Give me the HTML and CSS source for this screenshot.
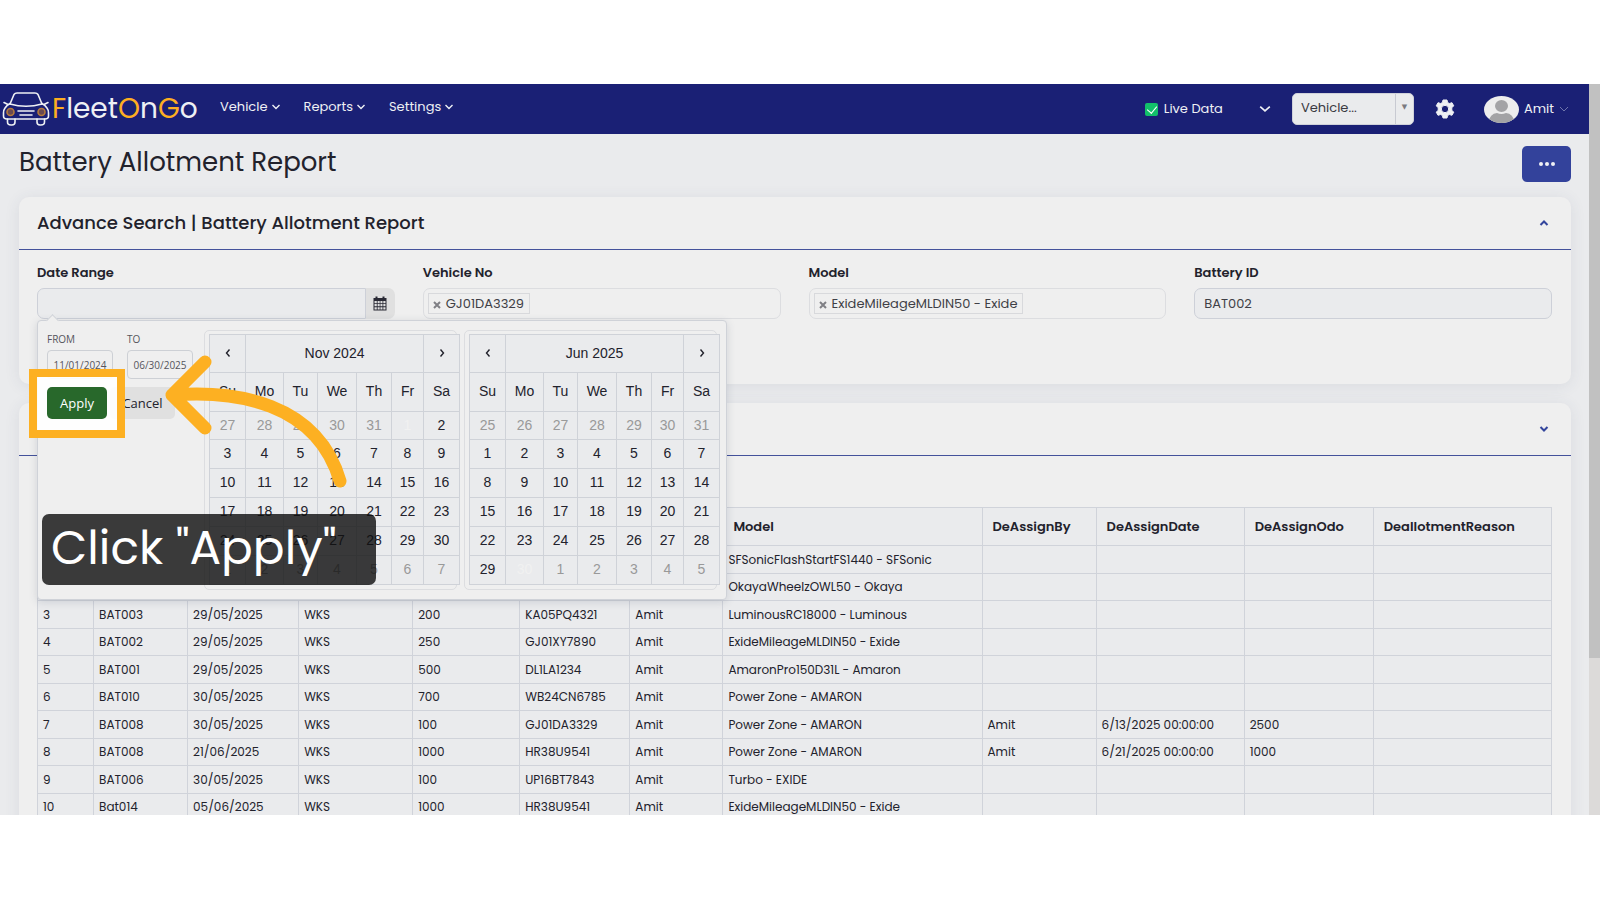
FILE: index.html
```html
<!DOCTYPE html>
<html lang="en">
<head>
  <meta charset="UTF-8" />
  <meta name="viewport" content="width=device-width, initial-scale=1.0" />
  <title>Battery Allotment Report</title>
  <link rel="stylesheet" href="styles.css">
</head>
<body>
  <div class="frame">
    <div class="main">
      <header class="navbar">
        <a class="logo" href="#">
          <svg width="48" height="36" viewBox="0 0 48 36" fill="none" stroke="#eef0f4" stroke-width="1.6" stroke-linecap="round" stroke-linejoin="round">
            <path d="M8 13 L12 3.500 Q13 2 15 2 H33 Q35 2 36 3.500 L40 13" />
            <path d="M8 12.500 Q5 14 3 17 Q1.500 19 1.500 22 V25 Q1.500 28 5 28 H43 Q46.500 28 46.500 25 V22 Q46.500 19 45 17 Q43 14 40 12.500" />
            <path d="M8 13 Q24 17.500 40 13 M2 11.500 L6 13.500 M46 11.500 L42 13.500" />
            <path d="M5.500 28 V31 Q5.500 34 9 34 H10 Q13 34 13 31 V28 M35 28 V31 Q35 34 38 34 H39 Q42.500 34 42.500 31 V28" />
            <path d="M16 20 H32 M18 24 H30" />
            <circle cx="8.500" cy="21" r="3.500" fill="#6b4a50" stroke="#b57a3c" />
            <circle cx="39.500" cy="21" r="3.500" fill="#6b4a50" stroke="#b57a3c" />
          </svg>
          <span><b>F</b>leet<b>O</b>n<b>G</b>o</span>
        </a>
        <nav class="menu">
          <a href="#">Vehicle <svg class="chev" viewBox="0 0 10 10"><path d="M1.500 3 L5 6.500 L8.500 3" /></svg></a>
          <a href="#">Reports <svg class="chev" viewBox="0 0 10 10"><path d="M1.500 3 L5 6.500 L8.500 3" /></svg></a>
          <a href="#">Settings <svg class="chev" viewBox="0 0 10 10"><path d="M1.500 3 L5 6.500 L8.500 3" /></svg></a>
        </nav>
        <div class="nav-right">
          <label class="live"><input type="checkbox" checked /> Live Data</label>
          <button class="icon-btn live-toggle" aria-label="Data options"><svg class="chev big" viewBox="0 0 10 10"><path d="M1 3 L5 6.500 L9 3" /></svg></button>
          <div class="vehicle-select">
            <select aria-label="Vehicle"><option>Vehicle...</option></select>
          </div>
          <button class="icon-btn gear" aria-label="Preferences">
            <svg width="20" height="20" viewBox="0 0 20 20">
              <path fill="#eef0f4" stroke="#eef0f4" stroke-linejoin="round" fill-rule="evenodd" d="M8 1 H12 L12.600 3.500 L14.300 4.500 L17 3.700 L18.700 6.800 L16.800 8.800 V11.200 L18.700 13.200 L17 16.300 L14.300 15.500 L12.600 16.500 L12 19 H8 L7.400 16.500 L5.700 15.500 L3 16.300 L1.300 13.200 L3.200 11.200 V8.800 L1.300 6.800 L3 3.700 L5.700 4.500 L7.400 3.500 Z M10 6.300 A3.700 3.700 0 1 0 10 13.700 A3.700 3.700 0 1 0 10 6.300 Z" />
            </svg>
          </button>
          <button class="icon-btn user">
            <svg width="35" height="27" viewBox="0 0 35 27">
              <clipPath id="face"><ellipse cx="17.500" cy="13.500" rx="17.500" ry="13.500" /></clipPath>
              <g clip-path="url(#face)">
                <rect width="35" height="27" fill="#ededed" />
                <ellipse cx="17.500" cy="10" rx="6.500" ry="6" fill="#a3a3a5" />
                <path d="M4 27 Q6 17.500 13 17 Q17.500 19 22 17 Q29 17.500 31 27 Z" fill="#a3a3a5" />
              </g>
            </svg>
            Amit
            <svg class="chev dim" viewBox="0 0 10 10"><path d="M1 3 L5 7 L9 3" /></svg>
          </button>
        </div>
      </header>

      <div class="page-head">
        <h1>Battery Allotment Report</h1>
        <button class="more" aria-label="More actions"><span></span><span></span><span></span></button>
      </div>

      <section class="card search-card">
        <div class="card-header">
          <h2>Advance Search | Battery Allotment Report</h2>
          <button class="icon-btn" aria-label="Collapse"><svg class="chev blue" viewBox="0 0 10 10"><path d="M1.500 7 L5 3.500 L8.500 7" /></svg></button>
        </div>
        <div class="filters">
          <div class="field">
            <label for="date-range">Date Range</label>
            <div class="date-group">
              <input type="text" id="date-range" autocomplete="off" />
              <button class="addon" aria-label="Open calendar">
                <svg width="14" height="15" viewBox="0 0 14 15">
                  <path fill="#2a2a35" fill-rule="evenodd" d="M0.500 2 H2.500 V0.500 H4.500 V2 H9.500 V0.500 H11.500 V2 H13.500 V14.500 H0.500 Z M1.500 5 V7.200 H3.800 V5 Z M4.600 5 V7.200 H6.700 V5 Z M7.400 5 V7.200 H9.500 V5 Z M10.300 5 V7.200 H12.500 V5 Z M1.500 8 V10.300 H3.800 V8 Z M4.600 8 V10.300 H6.700 V8 Z M7.400 8 V10.300 H9.500 V8 Z M10.300 8 V10.300 H12.500 V8 Z M1.500 11.200 V13.500 H3.800 V11.200 Z M4.600 11.200 V13.500 H6.700 V11.200 Z M7.400 11.200 V13.500 H9.500 V11.200 Z M10.300 11.200 V13.500 H12.500 V11.200 Z" />
                </svg>
              </button>
            </div>

            <div class="picker">
              <div class="range">
                <div class="range-inputs">
                  <label>FROM <input type="text" value="11/01/2024" /></label>
                  <label>TO <input type="text" value="06/30/2025" /></label>
                </div>
                <div class="range-buttons">
                  <button class="apply">Apply</button>
                  <button class="cancel">Cancel</button>
                </div>
              </div>
              <div class="calendar">
                <table>
                  <thead>
                    <tr class="month"><th><svg class="chev" viewBox="0 0 10 10"><path d="M6.500 1.500 L3.500 5 L6.500 8.500" /></svg></th><th colspan="5">Nov 2024</th><th><svg class="chev" viewBox="0 0 10 10"><path d="M3.500 1.500 L6.500 5 L3.500 8.500" /></svg></th></tr>
                    <tr><th class="w36">Su</th><th class="w38">Mo</th><th class="w34">Tu</th><th class="w39">We</th><th class="w35">Th</th><th class="w32">Fr</th><th class="w36">Sa</th></tr>
                  </thead>
                  <tbody>
                    <tr><td class="off">27</td><td class="off">28</td><td class="off">29</td><td class="off">30</td><td class="off">31</td><td class="active">1</td><td>2</td></tr>
                    <tr><td>3</td><td>4</td><td>5</td><td>6</td><td>7</td><td>8</td><td>9</td></tr>
                    <tr><td>10</td><td>11</td><td>12</td><td>13</td><td>14</td><td>15</td><td>16</td></tr>
                    <tr><td>17</td><td>18</td><td>19</td><td>20</td><td>21</td><td>22</td><td>23</td></tr>
                    <tr><td>24</td><td>25</td><td>26</td><td>27</td><td>28</td><td>29</td><td>30</td></tr>
                    <tr><td class="off">1</td><td class="off">2</td><td class="off">3</td><td class="off">4</td><td class="off">5</td><td class="off">6</td><td class="off">7</td></tr>
                  </tbody>
                </table>
              </div>
              <div class="calendar">
                <table>
                  <thead>
                    <tr class="month"><th><svg class="chev" viewBox="0 0 10 10"><path d="M6.500 1.500 L3.500 5 L6.500 8.500" /></svg></th><th colspan="5">Jun 2025</th><th><svg class="chev" viewBox="0 0 10 10"><path d="M3.500 1.500 L6.500 5 L3.500 8.500" /></svg></th></tr>
                    <tr><th class="w36">Su</th><th class="w38">Mo</th><th class="w34">Tu</th><th class="w39">We</th><th class="w35">Th</th><th class="w32">Fr</th><th class="w36">Sa</th></tr>
                  </thead>
                  <tbody>
                    <tr><td class="off">25</td><td class="off">26</td><td class="off">27</td><td class="off">28</td><td class="off">29</td><td class="off">30</td><td class="off">31</td></tr>
                    <tr><td>1</td><td>2</td><td>3</td><td>4</td><td>5</td><td>6</td><td>7</td></tr>
                    <tr><td>8</td><td>9</td><td>10</td><td>11</td><td>12</td><td>13</td><td>14</td></tr>
                    <tr><td>15</td><td>16</td><td>17</td><td>18</td><td>19</td><td>20</td><td>21</td></tr>
                    <tr><td>22</td><td>23</td><td>24</td><td>25</td><td>26</td><td>27</td><td>28</td></tr>
                    <tr><td>29</td><td class="active">30</td><td class="off">1</td><td class="off">2</td><td class="off">3</td><td class="off">4</td><td class="off">5</td></tr>
                  </tbody>
                </table>
              </div>

              <!-- walkthrough step -->
              <div class="spotlight"></div>
              <svg class="arrow" width="190" height="140" viewBox="0 0 190 140">
                <path d="M11 45 C74 40 156 52 179 131 M44 12 L11 45 L44 78" />
              </svg>
              <div class="step">Click "Apply"</div>
            </div>
          </div>

          <div class="field">
            <label for="vehicle-no">Vehicle No</label>
            <div class="tags">
              <span class="tag"><button aria-label="Remove vehicle"><svg viewBox="0 0 8 8"><path d="M1 1 L7 7 M7 1 L1 7" /></svg></button>GJ01DA3329</span>
              <input type="text" id="vehicle-no" />
            </div>
          </div>
          <div class="field">
            <label for="model">Model</label>
            <div class="tags">
              <span class="tag"><button aria-label="Remove model"><svg viewBox="0 0 8 8"><path d="M1 1 L7 7 M7 1 L1 7" /></svg></button>ExideMileageMLDIN50 - Exide</span>
              <input type="text" id="model" />
            </div>
          </div>
          <div class="field">
            <label for="battery-id">Battery ID</label>
            <input class="text-input" type="text" id="battery-id" value="BAT002" />
          </div>
        </div>
      </section>

      <section class="card">
        <div class="card-header">
          <h2></h2>
          <button class="icon-btn" aria-label="Expand"><svg class="chev blue" viewBox="0 0 10 10"><path d="M1.500 3 L5 6.500 L8.500 3" /></svg></button>
        </div>
        <div class="report">
          <table>
            <colgroup>
              <col class="c-no"><col class="c-id"><col class="c-date"><col class="c-type"><col class="c-odo"><col class="c-veh"><col class="c-by"><col class="c-model"><col class="c-dby"><col class="c-ddate"><col class="c-dodo"><col class="c-reason">
            </colgroup>
            <thead>
              <tr><th></th><th></th><th></th><th></th><th></th><th></th><th></th><th>Model</th><th>DeAssignBy</th><th>DeAssignDate</th><th>DeAssignOdo</th><th>DeallotmentReason</th></tr>
            </thead>
            <tbody>
              <tr><td></td><td></td><td></td><td></td><td></td><td></td><td></td><td>SFSonicFlashStartFS1440 - SFSonic</td><td></td><td></td><td></td><td></td></tr>
              <tr><td></td><td></td><td></td><td></td><td></td><td></td><td></td><td>OkayaWheelzOWL50 - Okaya</td><td></td><td></td><td></td><td></td></tr>
              <tr><td>3</td><td>BAT003</td><td>29/05/2025</td><td>WKS</td><td>200</td><td>KA05PQ4321</td><td>Amit</td><td>LuminousRC18000 - Luminous</td><td></td><td></td><td></td><td></td></tr>
              <tr><td>4</td><td>BAT002</td><td>29/05/2025</td><td>WKS</td><td>250</td><td>GJ01XY7890</td><td>Amit</td><td>ExideMileageMLDIN50 - Exide</td><td></td><td></td><td></td><td></td></tr>
              <tr><td>5</td><td>BAT001</td><td>29/05/2025</td><td>WKS</td><td>500</td><td>DL1LA1234</td><td>Amit</td><td>AmaronPro150D31L - Amaron</td><td></td><td></td><td></td><td></td></tr>
              <tr><td>6</td><td>BAT010</td><td>30/05/2025</td><td>WKS</td><td>700</td><td>WB24CN6785</td><td>Amit</td><td>Power Zone - AMARON</td><td></td><td></td><td></td><td></td></tr>
              <tr><td>7</td><td>BAT008</td><td>30/05/2025</td><td>WKS</td><td>100</td><td>GJ01DA3329</td><td>Amit</td><td>Power Zone - AMARON</td><td>Amit</td><td>6/13/2025 00:00:00</td><td>2500</td><td></td></tr>
              <tr><td>8</td><td>BAT008</td><td>21/06/2025</td><td>WKS</td><td>1000</td><td>HR38U9541</td><td>Amit</td><td>Power Zone - AMARON</td><td>Amit</td><td>6/21/2025 00:00:00</td><td>1000</td><td></td></tr>
              <tr><td>9</td><td>BAT006</td><td>30/05/2025</td><td>WKS</td><td>100</td><td>UP16BT7843</td><td>Amit</td><td>Turbo - EXIDE</td><td></td><td></td><td></td><td></td></tr>
              <tr><td>10</td><td>Bat014</td><td>05/06/2025</td><td>WKS</td><td>1000</td><td>HR38U9541</td><td>Amit</td><td>ExideMileageMLDIN50 - Exide</td><td></td><td></td><td></td><td></td></tr>
            </tbody>
          </table>
        </div>
      </section>
    </div>
    <div class="scrollbar"><div class="thumb"></div></div>
  </div>
</body>
</html>
```
FILE: styles.css
```css
* { box-sizing: border-box; }
body { margin: 0; height: 100vh; padding: 84px 0 85px; background: #fff; color: #22222c; font-family: Poppins, Inter, "Liberation Sans", sans-serif; font-size: 13px; overflow: hidden; }
button, input, select { font-family: inherit; font-size: inherit; color: inherit; margin: 0; }
button { cursor: pointer; }
a { color: inherit; text-decoration: none; }

.frame { display: flex; height: 100%; overflow: hidden; background: #eaebed; }
.main { flex: 1; min-width: 0; }
.scrollbar { width: 11px; background: #dcdad9; }
.thumb { height: 574px; background: #c1c1c1; }

/* navbar */
.navbar { display: flex; align-items: center; height: 50px; background: #1a2075; color: #eef0f4; padding: 0 20px 0 2px; }
.logo { display: flex; align-items: center; gap: 2px; width: 218px; font-size: 28px; font-weight: 400; line-height: 36px; }
.logo b { font-weight: 400; color: #fdae22; }
.menu { display: flex; gap: 23px; line-height: 20px; padding-bottom: 4px; }
.menu a { display: flex; align-items: center; gap: 3px; }
.chev { width: 10px; height: 10px; fill: none; stroke: currentColor; stroke-width: 1.4; }
.chev.big { width: 12px; height: 12px; }
.chev.dim { color: #6f76ab; stroke-width: 1; }
.chev.blue { color: #33459c; stroke-width: 2; }
.icon-btn { background: none; border: none; padding: 0; display: flex; align-items: center; }
.nav-right { display: flex; align-items: center; margin-left: auto; }
.live { display: flex; align-items: center; gap: 6px; }
.live input { appearance: none; width: 13px; height: 13px; border-radius: 2px; background: #12c06a; position: relative; }
.live input::after { content: ""; position: absolute; left: 4px; top: 1px; width: 5px; height: 8px; border: solid #fff; border-width: 0 1px 1px 0; transform: rotate(40deg); }
.live-toggle { margin: 0 21px 0 36px; }
.vehicle-select { position: relative; width: 122px; }
.vehicle-select select { appearance: none; width: 100%; height: 32px; padding: 0 8px 4px; border: 1px solid #d0d2da; border-radius: 5px; background: #eaebed; color: #3a3a42; }
.vehicle-select::after { content: "▼"; position: absolute; right: 1px; top: 1px; width: 17px; height: 30px; border-left: 1px solid #c8cad2; color: #7a7a80; font: 7px/26px "DejaVu Sans", sans-serif; text-align: center; pointer-events: none; }
.gear { margin: 0 29px 0 21px; }
.user { gap: 5px; }

/* page title */
.page-head { display: flex; justify-content: space-between; align-items: center; padding: 12px 18px 15px 19px; }
h1 { margin: 0; padding-bottom: 4px; font-size: 26px; font-weight: 400; line-height: 32px; }
.more { display: flex; justify-content: center; align-items: center; gap: 2px; width: 49px; height: 36px; border: none; border-radius: 5px; background: #33429b; }
.more span { width: 4px; height: 4px; border-radius: 50%; background: #f0f0f4; }

/* cards */
.card { margin: 0 18px 19px 19px; border-radius: 10px; background: #efefef; box-shadow: 0 2px 16px rgba(60, 70, 100, 0.09); }
.card-header { display: flex; justify-content: space-between; align-items: center; height: 53px; padding: 0 22px 0 18px; border-bottom: 1px solid #44529b; }
h2 { margin: 0; font-size: 18px; font-weight: 500; line-height: 24px; }
.filters { display: grid; grid-template-columns: repeat(4, 1fr); gap: 28px; padding: 13px 19px 65px 18px; }
.field { position: relative; min-width: 0; }
.field > label { display: block; height: 25px; line-height: 20px; font-weight: 600; }
.date-group { display: flex; height: 31px; }
.date-group input { flex: 1; min-width: 0; border: 1px solid #cdd0d8; border-radius: 7px 0 0 7px; background: #eaebed; }
.addon { display: flex; justify-content: center; align-items: center; width: 29px; padding: 0; border: none; border-radius: 0 7px 7px 0; background: #e0e0e0; }
.text-input { width: 100%; height: 31px; padding: 0 9px; border: 1px solid #cdd0d8; border-radius: 7px; background: #eaebed; color: #3f3f46; }
.tags { display: flex; align-items: center; height: 31px; padding: 0 4px; border: 1px solid #dcdde0; border-radius: 7px; }
.tags input { flex: 1; min-width: 0; border: none; background: none; }
.tag { display: flex; align-items: center; height: 21px; padding: 0 5px 0 4px; border: 1px solid #d8d9dc; color: #3f3f46; white-space: nowrap; }
.tag button { display: flex; padding: 3px 5px 0 0; border: none; background: none; }
.tag svg { width: 8px; height: 8px; stroke: #808085; stroke-width: 2; }

/* date range picker */
.picker { position: absolute; z-index: 10; left: 0; top: 57px; width: 690px; display: flex; gap: 7px; padding: 9px 8px; border: 1px solid #cfd2d8; border-radius: 4px; background: #efefef; box-shadow: 0 2px 8px rgba(50, 60, 90, 0.16); }
.picker::before { content: ""; position: absolute; left: 10px; top: -5px; width: 8px; height: 8px; border: solid #cfd2d8; border-width: 1px 0 0 1px; background: #efefef; transform: rotate(45deg); }
.range { width: 151px; font-family: "Open Sans", "Noto Sans", sans-serif; }
.range-inputs { display: flex; gap: 14px; padding-left: 1px; font-size: 10px; color: #55555c; }
.range-inputs label { width: 66px; line-height: 18px; }
.range-inputs input { display: block; width: 66px; height: 29px; margin-top: 2px; padding: 0 5px; border: 1px solid #cdd0d5; border-radius: 4px; background: #efefef; text-align: center; }
.range-buttons { display: flex; gap: 3px; margin-top: 8px; padding-left: 1px; }
.range-buttons button { height: 32px; padding: 0; border: none; border-radius: 5px; font-size: 13px; }
.range-buttons .apply { position: relative; z-index: 2; width: 60px; background: #28682b; color: #fff; }
.range-buttons .cancel { width: 65px; background: #e0e0e0; }
.calendar { width: 253px; height: 260px; padding: 3px 0 0 4px; border: 1px solid #dcdde0; border-radius: 5px; }
.calendar table { width: 251px; border-collapse: collapse; background: #eaebed; font-family: "Liberation Sans", Arial, sans-serif; font-size: 14px; }
.calendar th, .calendar td { height: 29px; padding: 0 0 2px; border: 1px solid #cfd2d8; font-weight: 400; text-align: center; }
.calendar th { height: 39px; }
.calendar .month th { height: 38px; }
.calendar tbody tr:first-child td { height: 28px; }
.calendar .off { color: #999; }
.calendar .active { color: #f1f1f1; }
.w32 { width: 32px; }
.w34 { width: 34px; }
.w35 { width: 35px; }
.w36 { width: 36px; }
.w38 { width: 38px; }
.w39 { width: 39px; }

/* walkthrough overlay */
.spotlight { position: absolute; z-index: 1; left: -9px; top: 48px; width: 96px; height: 69px; border: 8px solid #fdb022; background: rgba(255, 255, 255, 0.9); }
.arrow { position: absolute; z-index: 3; left: 123px; top: 29px; fill: none; stroke: #fdb022; stroke-width: 13; stroke-linecap: round; stroke-linejoin: round; }
.step { position: absolute; z-index: 4; left: 4px; top: 193px; width: 334px; height: 71px; padding-left: 9px; border-radius: 7px; background: rgba(16, 16, 16, 0.81); color: #fff; font-size: 47px; line-height: 68px; white-space: nowrap; }

/* report table */
.report { padding: 51px 19px 20px 18px; }
.report table { width: 100%; table-layout: fixed; border-collapse: collapse; background: #eaebed; font-size: 12px; }
.report th, .report td { border: 1px solid #d0d3da; padding: 0 5px; text-align: left; white-space: nowrap; }
.report th { height: 38px; padding: 0 10px; font-size: 13px; font-weight: 600; }
.report td { height: 27px; }
.report tr:nth-child(odd) td { height: 28px; }
.c-no { width: 56px; }
.c-id { width: 94px; }
.c-date { width: 111px; }
.c-type { width: 114px; }
.c-odo { width: 107px; }
.c-veh { width: 110px; }
.c-by { width: 93px; }
.c-model { width: 259px; }
.c-dby { width: 114px; }
.c-ddate { width: 148px; }
.c-dodo { width: 129px; }
.c-reason { width: 178px; }
```
